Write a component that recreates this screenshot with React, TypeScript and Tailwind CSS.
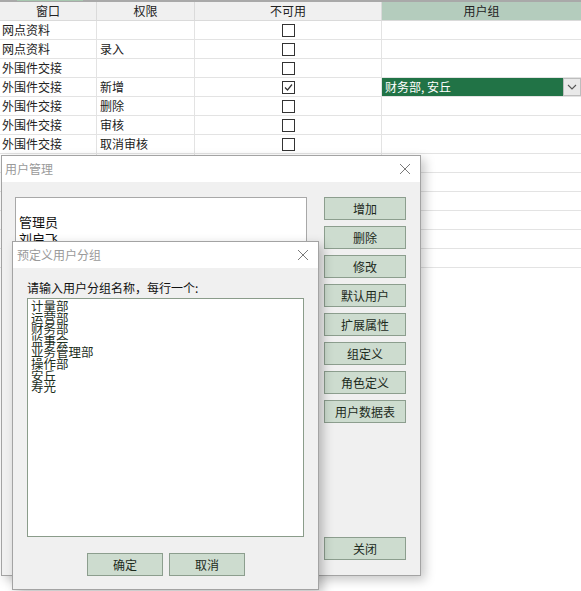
import React from "react";

const FONT = { fontFamily: '"Noto Sans CJK SC", "Noto Sans", sans-serif' };

const rows: { win: string; perm: string; checked?: boolean; group?: string }[] = [
  { win: "网点资料", perm: "" },
  { win: "网点资料", perm: "录入" },
  { win: "外围件交接", perm: "" },
  { win: "外围件交接", perm: "新增", checked: true, group: "财务部, 安丘" },
  { win: "外围件交接", perm: "删除" },
  { win: "外围件交接", perm: "审核" },
  { win: "外围件交接", perm: "取消审核" },
  { win: "", perm: "" },
  { win: "", perm: "" },
  { win: "", perm: "" },
  { win: "", perm: "" },
  { win: "", perm: "" },
  { win: "", perm: "" },
];

const groups = ["计量部", "运营部", "财务部", "监事会", "业务管理部", "操作部", "安丘", "寿光"];

const sideButtons = ["增加", "删除", "修改", "默认用户", "扩展属性", "组定义", "角色定义", "用户数据表"];

const CheckBox = ({ checked }: { checked?: boolean }) => (
  <div className="w-[13px] h-[13px] border border-[#333333] bg-white flex items-center justify-center">
    {checked && (
      <svg width="11" height="11" viewBox="0 0 11 11">
        <path d="M2 5.5 L4.5 8 L9 2.5" stroke="#333" strokeWidth="1.2" fill="none" />
      </svg>
    )}
  </div>
);

const CloseX = () => (
  <svg width="12" height="12" viewBox="0 0 12 12">
    <path d="M1 1 L11 11 M11 1 L1 11" stroke="#7a7a7a" strokeWidth="1" fill="none" />
  </svg>
);

const WinButton = ({ label, w }: { label: string; w: string }) => (
  <div
    className={`${w} h-[23px] bg-[#cddccf] border border-[#8c9e8e] flex items-center justify-center text-[12px] text-[#1c2a1c]`}
  >
    {label}
  </div>
);

export default function App() {
  return (
    <div className="relative w-[581px] h-[591px] overflow-hidden bg-white" style={FONT}>
      {/* top strip */}
      <div className="h-[2px] bg-[#a9a9a9] flex">
        <div className="ml-[17px] w-[66px] h-[1px] bg-[#a8c8b0]" />
      </div>

      {/* GRID */}
      <div className="grid grid-cols-[97px_98px_187px_1fr] h-[19px] text-[12px] text-[#222]">
        <div className="bg-[#f0f0f0] border-r border-b border-[#dadada] flex items-center justify-center">窗口</div>
        <div className="bg-[#f0f0f0] border-r border-b border-[#dadada] flex items-center justify-center">权限</div>
        <div className="bg-[#f0f0f0] border-r border-b border-[#dadada] flex items-center justify-center">不可用</div>
        <div className="bg-[#b4ccbd] border-b border-[#dadada] flex items-center justify-center">用户组</div>
      </div>
      {rows.map((r, i) => (
        <div key={i} className="grid grid-cols-[97px_98px_187px_1fr] h-[19px] text-[12px] text-[#222]">
          <div className="border-r border-b border-[#e3e3e3] pl-[2px] flex items-center">{r.win}</div>
          <div className="border-r border-b border-[#e3e3e3] pl-[3px] flex items-center">{r.perm}</div>
          <div className="border-r border-b border-[#e3e3e3] flex items-center justify-center">
            {i < 7 && <CheckBox checked={r.checked} />}
          </div>
          <div className="border-b border-[#e3e3e3] flex items-stretch">
            {r.group ? (
              <>
                <div className="flex-1 bg-[#217346] text-white pl-[3px] flex items-center">{r.group}</div>
                <div className="w-[18px] bg-[#e9e9e9] border border-[#bdbdbd] flex items-center justify-center">
                  <svg width="10" height="6" viewBox="0 0 10 6">
                    <path d="M1 1 L5 5 L9 1" stroke="#555" strokeWidth="1.1" fill="none" />
                  </svg>
                </div>
              </>
            ) : null}
          </div>
        </div>
      ))}

      {/* 用户管理 dialog */}
      <div className="absolute left-[1px] top-[155px] w-[420px] h-[421px] border border-[#a3a3a3] bg-[#f0f0f0] flex flex-col shadow-[4px_4px_10px_rgba(0,0,0,0.22)]">
        <div className="h-[26px] bg-white flex items-center justify-between pl-[3px] pr-[9px] text-[12px] text-[#9a9a9a]">
          <span>用户管理</span>
          <CloseX />
        </div>
        <div className="flex-1 flex pl-[13px] pt-[15px] pb-[15px]">
          <div className="w-[292px] h-[340px] bg-white border border-[#a8a8a8] pl-[3px] pt-[15px] text-[13px] leading-[17px] text-[#111]">
            <div>管理员</div>
            <div>刘启飞</div>
          </div>
          <div className="ml-[17px] flex flex-col gap-[6px]">
            {sideButtons.map((b) => (
              <WinButton key={b} label={b} w="w-[82px]" />
            ))}
            <div className="mt-auto">
              <WinButton label="关闭" w="w-[82px]" />
            </div>
          </div>
        </div>
      </div>

      {/* 预定义用户分组 dialog */}
      <div className="absolute left-[12px] top-[241px] w-[307px] h-[349px] border border-[#a3a3a3] bg-[#f0f0f0] flex flex-col shadow-[4px_4px_10px_rgba(0,0,0,0.25)]">
        <div className="h-[26px] bg-white flex items-center justify-between pl-[4px] pr-[9px] text-[12px] text-[#9a9a9a]">
          <span>预定义用户分组</span>
          <CloseX />
        </div>
        <div className="flex flex-col pl-[14px]">
          <div className="mt-[12px] h-[16px] text-[12px] leading-[16px] text-[#111]">请输入用户分组名称，每行一个:</div>
          <div className="mt-[2px] w-[277px] h-[239px] bg-white border border-[#8a9c8a] pl-[3px] pt-[1px] text-[12.5px] leading-[11.6px] text-[#1e301e]">
            {groups.map((g) => (
              <div key={g}>{g}</div>
            ))}
          </div>
          <div className="mt-[16px] flex gap-[6px] pl-[60px]">
            <WinButton label="确定" w="w-[76px]" />
            <WinButton label="取消" w="w-[76px]" />
          </div>
        </div>
      </div>
    </div>
  );
}
